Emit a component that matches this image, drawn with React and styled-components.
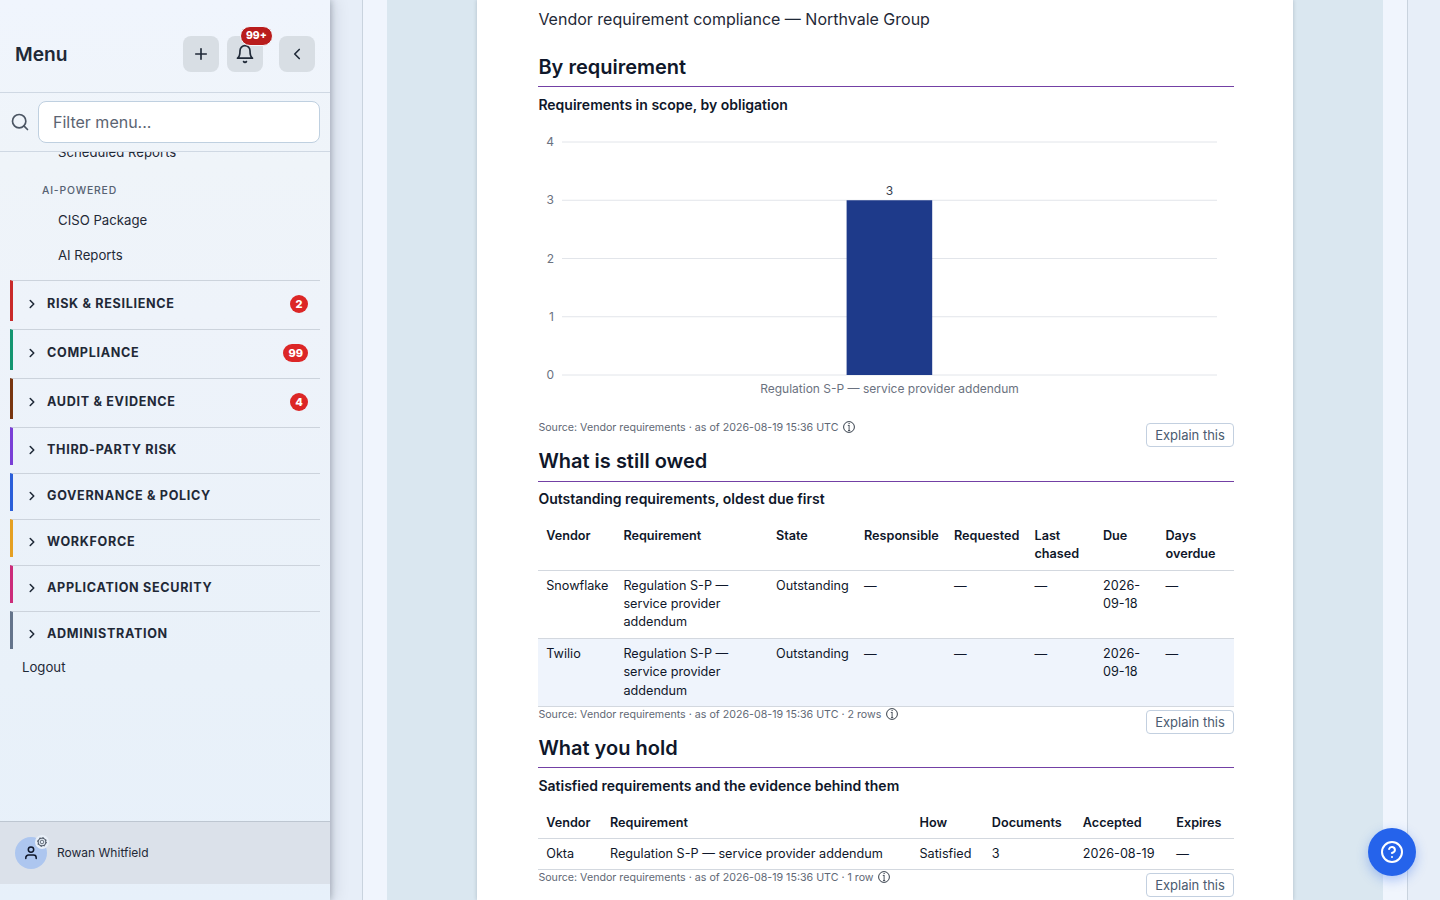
import React, { useState } from 'react';
import styled, { createGlobalStyle } from 'styled-components';
import { Plus, ChevronLeft, ChevronRight, Search, CircleHelp } from 'lucide-react';

const GlobalStyle = createGlobalStyle`
    * {
        box-sizing: border-box;
    }
    body {
        margin: 0;
        overflow: hidden;
        font-family: Inter, "DejaVu Sans", sans-serif;
        color: #1f2937;
    }
    h1, h2, h3, p {
        margin: 0;
    }
    button, input {
        font-family: inherit;
    }
`;

const Shell = styled.div`
    display: flex;
    width: 100vw;
    height: 900px;
    background: #e7eef8;
`;

const Sidebar = styled.aside`
    display: flex;
    flex-direction: column;
    flex: none;
    width: 330px;
    height: 900px;
    padding-bottom: 16px;
    background: linear-gradient(180deg, #f0f5fd 0%, #eff4f9 18%, #eef3fa 35%, #e9f1f9 75%, #e7f0fa 100%);
    box-shadow: 4px 0 16px rgba(15, 23, 42, 0.12), 1px 0 6px rgba(15, 23, 42, 0.25);
    z-index: 2;
`;

const SidebarHeader = styled.div`
    display: flex;
    align-items: center;
    height: 93px;
    padding: 15px 15px 0;
    border-bottom: 1px solid #cfd8e3;
`;

const MenuTitle = styled.h1`
    flex: 1;
    font-size: 19.2px;
    font-weight: 600;
`;

const IconButton = styled.button`
    position: relative;
    display: flex;
    align-items: center;
    justify-content: center;
    width: 36px;
    height: 36px;
    margin-left: ${props => props.$gap || 0}px;
    padding: 0;
    border: none;
    border-radius: 8px;
    background: #d8dee4;
    color: #1f2937;
`;

const BellBadge = styled.span`
    position: absolute;
    top: -10px;
    left: 13px;
    padding: 0 5px;
    border: 1px solid #f3f6fb;
    border-radius: 10px;
    background: #b91c1c;
    color: #fff;
    font-size: 10.4px;
    font-weight: 800;
    line-height: 18px;
`;

const SearchRow = styled.div`
    display: flex;
    align-items: center;
    gap: 8px;
    height: 59px;
    padding: 0 10px;
    border-bottom: 1px solid #cfd8e3;
    color: #4b5563;
`;

const FilterInput = styled.input`
    flex: 1;
    min-width: 0;
    height: 42px;
    padding: 0 14px;
    border: 1px solid #bfd0e0;
    border-radius: 8px;
    background: #fff;
    font-size: 16px;
    &::placeholder {
        color: #5b6472;
    }
`;

const Nav = styled.nav`
    flex: 1;
    min-height: 0;
    overflow: hidden;
    padding: 0 10px;
`;

const SubList = styled.div`
    margin-top: -17px;
    padding-bottom: 7px;
`;

const SubItem = styled.div`
    padding-left: 48px;
    font-size: 13.2px;
    line-height: 35px;
`;

const SubHeading = styled.div`
    padding: 13px 0 5px 32px;
    color: #566272;
    font-size: 10.4px;
    font-weight: 500;
    line-height: 15px;
    letter-spacing: 0.83px;
`;

const NavGroup = styled.div`
    display: flex;
    align-items: center;
    gap: 8px;
    margin-bottom: 8px;
    padding: 14px 12px 8px 12px;
    border-top: 1px solid #ccd3dc;
    border-left: 3px solid ${props => props.$color};
    font-size: 12.6px;
    font-weight: 650;
    line-height: 15px;
    letter-spacing: 0.68px;
`;

const GroupName = styled.span`
    padding-bottom: ${props => props.$counted ? 2 : 0}px;
`;

const Count = styled.span`
    min-width: 18px;
    margin-left: auto;
    padding: 0 5px;
    border-radius: 9px;
    background: #dc2626;
    color: #fff;
    font-size: 11px;
    font-weight: 800;
    line-height: 18px;
    letter-spacing: 0;
    text-align: center;
`;

const Logout = styled.div`
    padding: 2px 12px;
    font-size: 13.2px;
    line-height: 16px;
`;

const UserBar = styled.div`
    display: flex;
    align-items: center;
    gap: 10px;
    height: 63px;
    padding: 0 15px;
    border-top: 1px solid #bdc6d1;
    background: #dbe1ea;
`;

const UserName = styled.span`
    padding-bottom: 2px;
    font-size: 12px;
`;

const Avatar = styled.div`
    position: relative;
    display: flex;
    align-items: center;
    justify-content: center;
    width: 32px;
    height: 32px;
    border-radius: 50%;
    background: #adc6ef;
    color: #0f172a;
`;

const GearDot = styled.span`
    position: absolute;
    top: -2px;
    right: -2px;
    display: flex;
    align-items: center;
    justify-content: center;
    width: 14px;
    height: 14px;
    border-radius: 50%;
    background: #e8eff8;
    color: #4b5563;
`;

const Main = styled.main`
    flex: 1;
    min-width: 0;
    padding: 0 32px;
`;

const Panel = styled.div`
    height: 900px;
    padding: 0 24px;
    border: solid #c9d3de;
    border-width: 0 1px;
    background: #f0f5fd;
`;

const Backdrop = styled.div`
    display: flex;
    justify-content: center;
    height: 900px;
    background: #dae7f0;
`;

const Paper = styled.article`
    width: 816px;
    height: 900px;
    padding: 0 58.6px 0 61.4px;
    overflow: hidden;
    background: #fff;
    box-shadow: 0 0 4px rgba(15, 23, 42, 0.2);
    color: #0f172a;
`;

const Lead = styled.p`
    height: 46px;
    padding-top: 7px;
    color: #1f2937;
    font-size: 16px;
    line-height: 25px;
`;

const SectionTitle = styled.h2`
    height: 41px;
    padding-top: 7.8px;
    border-bottom: 1px solid #7340a5;
    font-size: 20px;
    font-weight: 600;
    line-height: 26px;
`;

const BlockTitle = styled.h3`
    height: 39.51px;
    padding-top: 8.8px;
    font-size: 14px;
    font-weight: 600;
    line-height: 18px;
`;

const Chart = styled.svg`
    display: block;
    width: 696px;
    height: 293px;
    margin-top: 0.49px;
    font-size: 12px;
    fill: #6b7280;
`;

const Table = styled.table`
    width: 696px;
    margin-left: -0.2px;
    table-layout: fixed;
    border-collapse: separate;
    border-spacing: 0;
    font-size: 12.667px;
    line-height: 1.45;
`;

const Th = styled.th`
    width: ${props => props.$width}px;
    padding: 6px 8px;
    border-bottom: 1px solid #d3d8df;
    font-weight: 600;
    text-align: left;
    vertical-align: top;
`;

const Td = styled.td`
    padding: 6px 8px;
    border-bottom: 1px solid #d3d8df;
    vertical-align: top;
`;

const Row = styled.tr`
    &:nth-child(even) {
        background: #eff4fc;
    }
`;

const SourceRow = styled.div`
    display: flex;
    justify-content: space-between;
    align-items: flex-start;
    height: ${props => props.$height || 20.2}px;
`;

const Source = styled.p`
    display: flex;
    align-items: center;
    gap: 4.6px;
    color: #5f6875;
    font-size: 10.667px;
    line-height: 15px;
`;

const InfoSvg = styled.svg`
    flex: none;
    width: 12px;
    height: 12px;
    margin-top: -1px;
    fill: none;
    stroke: #1f2937;
`;

const ExplainButton = styled.button`
    flex: none;
    width: 88px;
    height: 24px;
    margin: 3px 0.4px 0 0;
    padding: 0;
    border: 1px solid #c3d0e0;
    border-radius: 4px;
    background: #fff;
    color: #4b5b70;
    font-size: 13px;
`;

const HelpButton = styled.button`
    position: fixed;
    right: 24px;
    bottom: 24px;
    display: flex;
    align-items: center;
    justify-content: center;
    width: 48px;
    height: 48px;
    padding: 0;
    border: none;
    border-radius: 50%;
    background: #2563eb;
    box-shadow: 0 4px 12px rgba(37, 99, 235, 0.35);
    color: #fff;
`;

const groups = [
    { name: 'RISK & RESILIENCE', color: '#c92a2a', count: 2 },
    { name: 'COMPLIANCE', color: '#149570', count: 99 },
    { name: 'AUDIT & EVIDENCE', color: '#78350f', count: 4 },
    { name: 'THIRD-PARTY RISK', color: '#7a3fd6' },
    { name: 'GOVERNANCE & POLICY', color: '#2b5fd9' },
    { name: 'WORKFORCE', color: '#e5a023' },
    { name: 'APPLICATION SECURITY', color: '#cc2c7a' },
    { name: 'ADMINISTRATION', color: '#64748b' }
];

const owed = {
    columns: [
        ['Vendor', 77.2], ['Requirement', 152.6], ['State', 88], ['Responsible', 90],
        ['Requested', 80.5], ['Last chased', 68.5], ['Due', 62.5], ['Days overdue', 76.7]
    ],
    rows: [
        ['Snowflake', 'Regulation S-P — service provider addendum', 'Outstanding', '—', '—', '—', '2026-09-18', '—'],
        ['Twilio', 'Regulation S-P — service provider addendum', 'Outstanding', '—', '—', '—', '2026-09-18', '—']
    ]
};

const held = {
    columns: [
        ['Vendor', 63.8], ['Requirement', 309.5], ['How', 72.3], ['Documents', 91],
        ['Accepted', 93.5], ['Expires', 65.9]
    ],
    rows: [
        ['Okta', 'Regulation S-P — service provider addendum', 'Satisfied', '3', '2026-08-19', '—']
    ]
};

function BellIcon() {
    return (
        <svg width='20' height='20' viewBox='0 0 24 24' fill='none' stroke='currentColor' strokeWidth='2' strokeLinecap='round' strokeLinejoin='round'>
            <path d='M6 8a6 6 0 0 1 12 0c0 7 3 9 3 9H3s3-2 3-9' />
            <path d='M10.3 21a1.94 1.94 0 0 0 3.4 0' />
        </svg>
    );
}

function PersonIcon() {
    return (
        <svg width='14' height='14' viewBox='0 0 14 14' fill='none' stroke='currentColor' strokeWidth='1.5' strokeLinecap='round'>
            <circle cx='7' cy='3.6' r='2.7' />
            <path d='M1.8 12.6v-.8a2.7 2.7 0 0 1 2.7-2.7h5a2.7 2.7 0 0 1 2.7 2.7v.8' />
        </svg>
    );
}

function GearIcon() {
    return (
        <svg width='10' height='10' viewBox='0 0 10 10' fill='none' stroke='currentColor'>
            <circle cx='5' cy='5' r='3.9' />
            <circle cx='5' cy='5' r='1.8' strokeWidth='0.8' />
            <circle cx='5' cy='5' r='4.5' strokeDasharray='1.4 2.13' />
        </svg>
    );
}

function InfoIcon() {
    return (
        <InfoSvg viewBox='0 0 12 12'>
            <circle cx='6' cy='6' r='5.4' strokeWidth='0.9' />
            <path d='M5.6 2h1v1h-1z' fill='#1f2937' stroke='none' />
            <path d='M4.8 4.4h1.7M6.1 4.4v5.2M5 9.6h2.2' strokeWidth='0.8' />
        </InfoSvg>
    );
}

function DataTable({ columns, rows }) {
    return (
        <Table>
            <thead>
                <tr>
                    {columns.map(([label, width]) => <Th key={label} $width={width}>{label}</Th>)}
                </tr>
            </thead>
            <tbody>
                {rows.map(row => (
                    <Row key={row[0]}>
                        {row.map((cell, i) => <Td key={i}>{cell}</Td>)}
                    </Row>
                ))}
            </tbody>
        </Table>
    );
}

function SourceLine({ text, height }) {
    return (
        <SourceRow $height={height}>
            <Source>{text} <InfoIcon /></Source>
            <ExplainButton type='button'>Explain this</ExplainButton>
        </SourceRow>
    );
}

function RequirementChart() {
    // baseline sits at 248, one unit is 58.25 tall
    const y = value => 248 - value * 58.25;

    return (
        <Chart viewBox='0 0 696 293'>
            {[0, 1, 2, 3, 4].map(tick => (
                <g key={tick}>
                    <line x1='24' x2='679' y1={y(tick)} y2={y(tick)} stroke='#e2e5ea' />
                    <text x='16' y={y(tick) + 4} textAnchor='end'>{tick}</text>
                </g>
            ))}
            <rect x='308.6' y={y(3)} width='85.6' height={3 * 58.25} fill='#1e3a8a' />
            <text x='351.5' y='68' textAnchor='middle' fill='#374151'>3</text>
            <text x='351.5' y='266' textAnchor='middle'>Regulation S-P — service provider addendum</text>
        </Chart>
    );
}

function Menu() {
    const [filter, setFilter] = useState('');

    return (
        <Sidebar>
            <SidebarHeader>
                <MenuTitle>Menu</MenuTitle>
                <IconButton type='button'><Plus size={18} strokeWidth={2.2} /></IconButton>
                <IconButton type='button' $gap={8}>
                    <BellIcon />
                    <BellBadge>99+</BellBadge>
                </IconButton>
                <IconButton type='button' $gap={16}><ChevronLeft size={18} strokeWidth={2.2} /></IconButton>
            </SidebarHeader>
            <SearchRow>
                <Search size={20} />
                <FilterInput
                    placeholder='Filter menu...'
                    value={filter}
                    onChange={e => setFilter(e.target.value)}
                />
            </SearchRow>
            <Nav>
                <SubList>
                    <SubItem>Scheduled Reports</SubItem>
                    <SubHeading>AI-POWERED</SubHeading>
                    <SubItem>CISO Package</SubItem>
                    <SubItem>AI Reports</SubItem>
                </SubList>
                {groups.map(group => (
                    <NavGroup key={group.name} $color={group.color}>
                        <ChevronRight size={14} strokeWidth={2.7} />
                        <GroupName $counted={Boolean(group.count)}>{group.name}</GroupName>
                        {group.count ? <Count>{group.count}</Count> : null}
                    </NavGroup>
                ))}
                <Logout>Logout</Logout>
            </Nav>
            <UserBar>
                <Avatar>
                    <PersonIcon />
                    <GearDot><GearIcon /></GearDot>
                </Avatar>
                <UserName>Rowan Whitfield</UserName>
            </UserBar>
        </Sidebar>
    );
}

export default function App() {
    return (
        <Shell>
            <GlobalStyle />
            <Menu />
            <Main>
                <Panel>
                    <Backdrop>
                        <Paper>
                            <Lead>Vendor requirement compliance — Northvale Group</Lead>
                            <SectionTitle>By requirement</SectionTitle>
                            <BlockTitle>Requirements in scope, by obligation</BlockTitle>
                            <RequirementChart />
                            <SourceLine text='Source: Vendor requirements · as of 2026-08-19 15:36 UTC' height={20.55} />
                            <SectionTitle>What is still owed</SectionTitle>
                            <BlockTitle>Outstanding requirements, oldest due first</BlockTitle>
                            <DataTable {...owed} />
                            <SourceLine text='Source: Vendor requirements · as of 2026-08-19 15:36 UTC · 2 rows' />
                            <SectionTitle>What you hold</SectionTitle>
                            <BlockTitle>Satisfied requirements and the evidence behind them</BlockTitle>
                            <DataTable {...held} />
                            <SourceLine text='Source: Vendor requirements · as of 2026-08-19 15:36 UTC · 1 row' />
                        </Paper>
                    </Backdrop>
                </Panel>
            </Main>
            <HelpButton type='button'><CircleHelp size={24} /></HelpButton>
        </Shell>
    );
}
